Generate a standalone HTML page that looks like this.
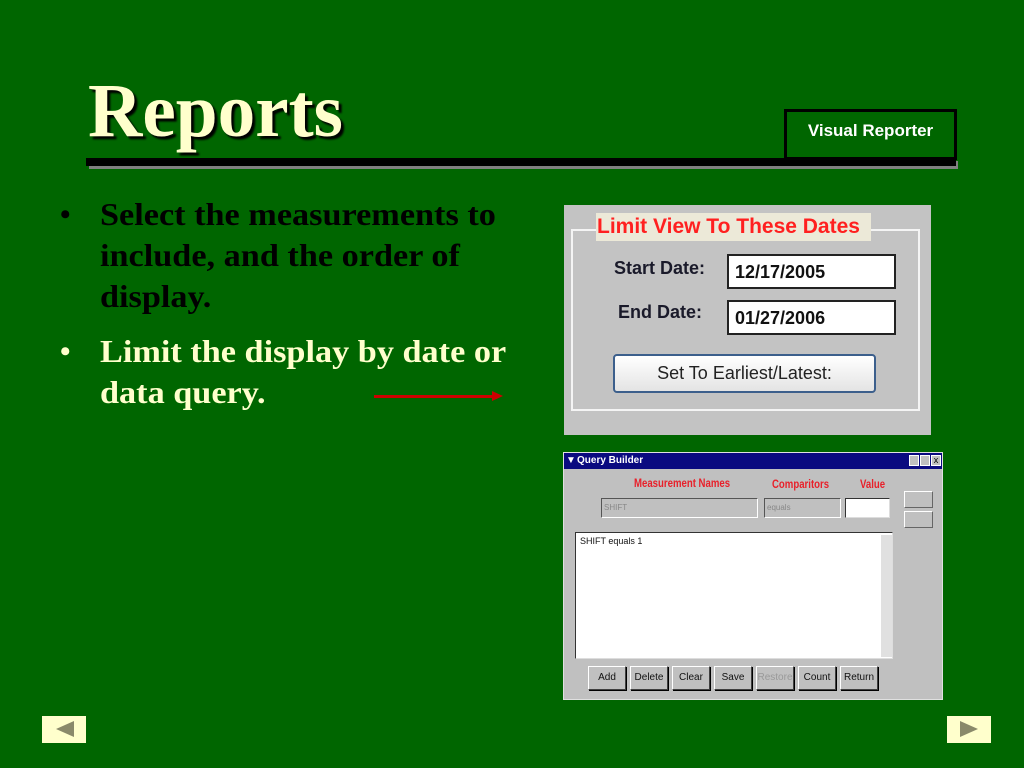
<!DOCTYPE html>
<html><head><meta charset="utf-8"><style>
*{margin:0;padding:0;box-sizing:border-box}
body{width:1024px;height:768px;background:#006600;position:relative;overflow:hidden;font-family:"Liberation Sans",sans-serif}
.a{position:absolute}
.ser{font-family:"Liberation Serif",serif;font-weight:bold}
.btn{position:absolute;top:666px;width:38px;height:24px;background:#c0c0c0;border:1px solid;border-color:#fff #404040 #404040 #fff;box-shadow:1px 1px 0 #000;font-size:10px;text-align:center;line-height:22px;color:#111;font-family:"Liberation Sans",sans-serif}
.bl{position:absolute;left:100px;font-size:32px;line-height:41px;white-space:nowrap;transform:scaleX(1.07);transform-origin:left}
</style></head><body>
<div class="a ser" style="left:88px;top:66px;font-size:76px;color:#ffffcc;text-shadow:3px 3px 2px #000;line-height:90px;transform:scaleX(.99);transform-origin:left">Reports</div>
<div class="a" style="left:89px;top:161px;width:869px;height:8px;background:#808080"></div>
<div class="a" style="left:86px;top:158px;width:870px;height:8px;background:#000"></div>
<div class="a" style="left:784px;top:109px;width:173px;height:51px;border:3px solid #000;background:#006600;color:#fff;font-weight:bold;font-size:17px;text-align:center;line-height:38px">Visual Reporter</div>

<div class="ser bl" style="top:194px;color:#000">Select the measurements to<br>include, and the order of<br>display.</div>
<div class="a ser" style="left:60px;top:194px;font-size:30px;line-height:41px;color:#000">•</div>
<div class="ser bl" style="top:331px;color:#ffffcc">Limit the display by date or<br>data query.</div>
<div class="a ser" style="left:60px;top:331px;font-size:30px;line-height:41px;color:#ffffcc">•</div>
<div class="a" style="left:374px;top:395px;width:120px;height:3px;background:#cc0000"></div>
<div class="a" style="left:492px;top:391px;width:0;height:0;border-left:11px solid #cc0000;border-top:5px solid transparent;border-bottom:5px solid transparent"></div>

<!-- date panel -->
<div class="a" style="left:564px;top:205px;width:367px;height:230px;background:#c3c3c3">
 <div class="a" style="left:7px;top:24px;width:349px;height:182px;border:2px solid #f4f4f4"></div>
 <div class="a" style="left:32px;top:8px;width:275px;height:28px;background:#ece9d8;color:#ff2020;font-size:21px;font-weight:bold;line-height:27px;padding-left:1px;white-space:nowrap">Limit View To These Dates</div>
 <div class="a" style="left:50px;top:53px;font-size:18px;font-weight:bold;color:#1a1a2a">Start Date:</div>
 <div class="a" style="left:54px;top:97px;font-size:18px;font-weight:bold;color:#1a1a2a">End Date:</div>
 <div class="a" style="left:163px;top:49px;width:169px;height:35px;background:#fff;border:2px solid #222;font-size:18px;font-weight:bold;line-height:33px;padding-left:6px;color:#111">12/17/2005</div>
 <div class="a" style="left:163px;top:95px;width:169px;height:35px;background:#fff;border:2px solid #222;font-size:18px;font-weight:bold;line-height:33px;padding-left:6px;color:#111">01/27/2006</div>
 <div class="a" style="left:49px;top:149px;width:263px;height:39px;background:linear-gradient(#fff,#e4e4e4);border:2px solid #3c5f8c;border-radius:4px;font-size:18px;line-height:35px;text-align:center;color:#222">Set To Earliest/Latest:</div>
</div>

<!-- query builder -->
<div class="a" style="left:563px;top:452px;width:380px;height:248px;background:#c0c0c0;border:1px solid #e0e0e0">
 <div class="a" style="left:0;top:0;width:378px;height:16px;background:#0a0a80;color:#fff;font-size:10px;font-weight:bold;line-height:16px;padding-left:13px">Query Builder</div>
 <div class="a" style="left:2px;top:3px;color:#fff;font-size:10px;line-height:10px">▼</div>
 <div class="a" style="left:345px;top:2px;width:10px;height:11px;background:#c0c0c0;border:1px solid #fff"></div>
 <div class="a" style="left:356px;top:2px;width:10px;height:11px;background:#c0c0c0;border:1px solid #fff"></div>
 <div class="a" style="left:367px;top:2px;width:10px;height:11px;background:#c0c0c0;border:1px solid #fff;font-size:9px;line-height:9px;text-align:center">x</div>
 <div class="a" style="left:70px;top:23px;color:#e8202a;font-size:12px;font-weight:bold;transform:scaleX(.8);transform-origin:left">Measurement Names</div>
 <div class="a" style="left:208px;top:24px;color:#e8202a;font-size:12px;font-weight:bold;transform:scaleX(.8);transform-origin:left">Comparitors</div>
 <div class="a" style="left:296px;top:24px;color:#e8202a;font-size:12px;font-weight:bold;transform:scaleX(.8);transform-origin:left">Value</div>
 <div class="a" style="left:37px;top:45px;width:157px;height:20px;border:1px solid;border-color:#555 #fff #fff #555;color:#888;font-size:8px;line-height:18px;padding-left:2px">SHIFT</div>
 <div class="a" style="left:200px;top:45px;width:77px;height:20px;border:1px solid;border-color:#555 #fff #fff #555;color:#888;font-size:8px;line-height:18px;padding-left:2px">equals</div>
 <div class="a" style="left:281px;top:45px;width:45px;height:20px;background:#fff;border:1px solid;border-color:#333 #ddd #ddd #333"></div>
 <div class="a" style="left:340px;top:38px;width:29px;height:17px;border:1px solid;border-color:#fff #666 #666 #fff"></div>
 <div class="a" style="left:340px;top:58px;width:29px;height:17px;border:1px solid;border-color:#fff #666 #666 #fff"></div>
 <div class="a" style="left:11px;top:79px;width:318px;height:127px;background:#fff;border:1px solid;border-color:#333 #ddd #ddd #333;font-size:9px;padding:3px 4px;color:#111">SHIFT equals 1</div>
 <div class="a" style="left:317px;top:82px;width:11px;height:122px;background:#e0e0e0"></div>
</div>
<div class="btn" style="left:588px">Add</div>
<div class="btn" style="left:630px">Delete</div>
<div class="btn" style="left:672px">Clear</div>
<div class="btn" style="left:714px">Save</div>
<div class="btn" style="left:756px;color:#999">Restore</div>
<div class="btn" style="left:798px">Count</div>
<div class="btn" style="left:840px">Return</div>

<!-- nav -->
<div class="a" style="left:42px;top:716px;width:44px;height:27px;background:#ffffcc"></div>
<div class="a" style="left:56px;top:721px;border-right:18px solid #8a8a6a;border-top:8px solid transparent;border-bottom:8px solid transparent"></div>
<div class="a" style="left:947px;top:716px;width:44px;height:27px;background:#ffffcc"></div>
<div class="a" style="left:960px;top:721px;border-left:18px solid #8a8a6a;border-top:8px solid transparent;border-bottom:8px solid transparent"></div>
</body></html>
